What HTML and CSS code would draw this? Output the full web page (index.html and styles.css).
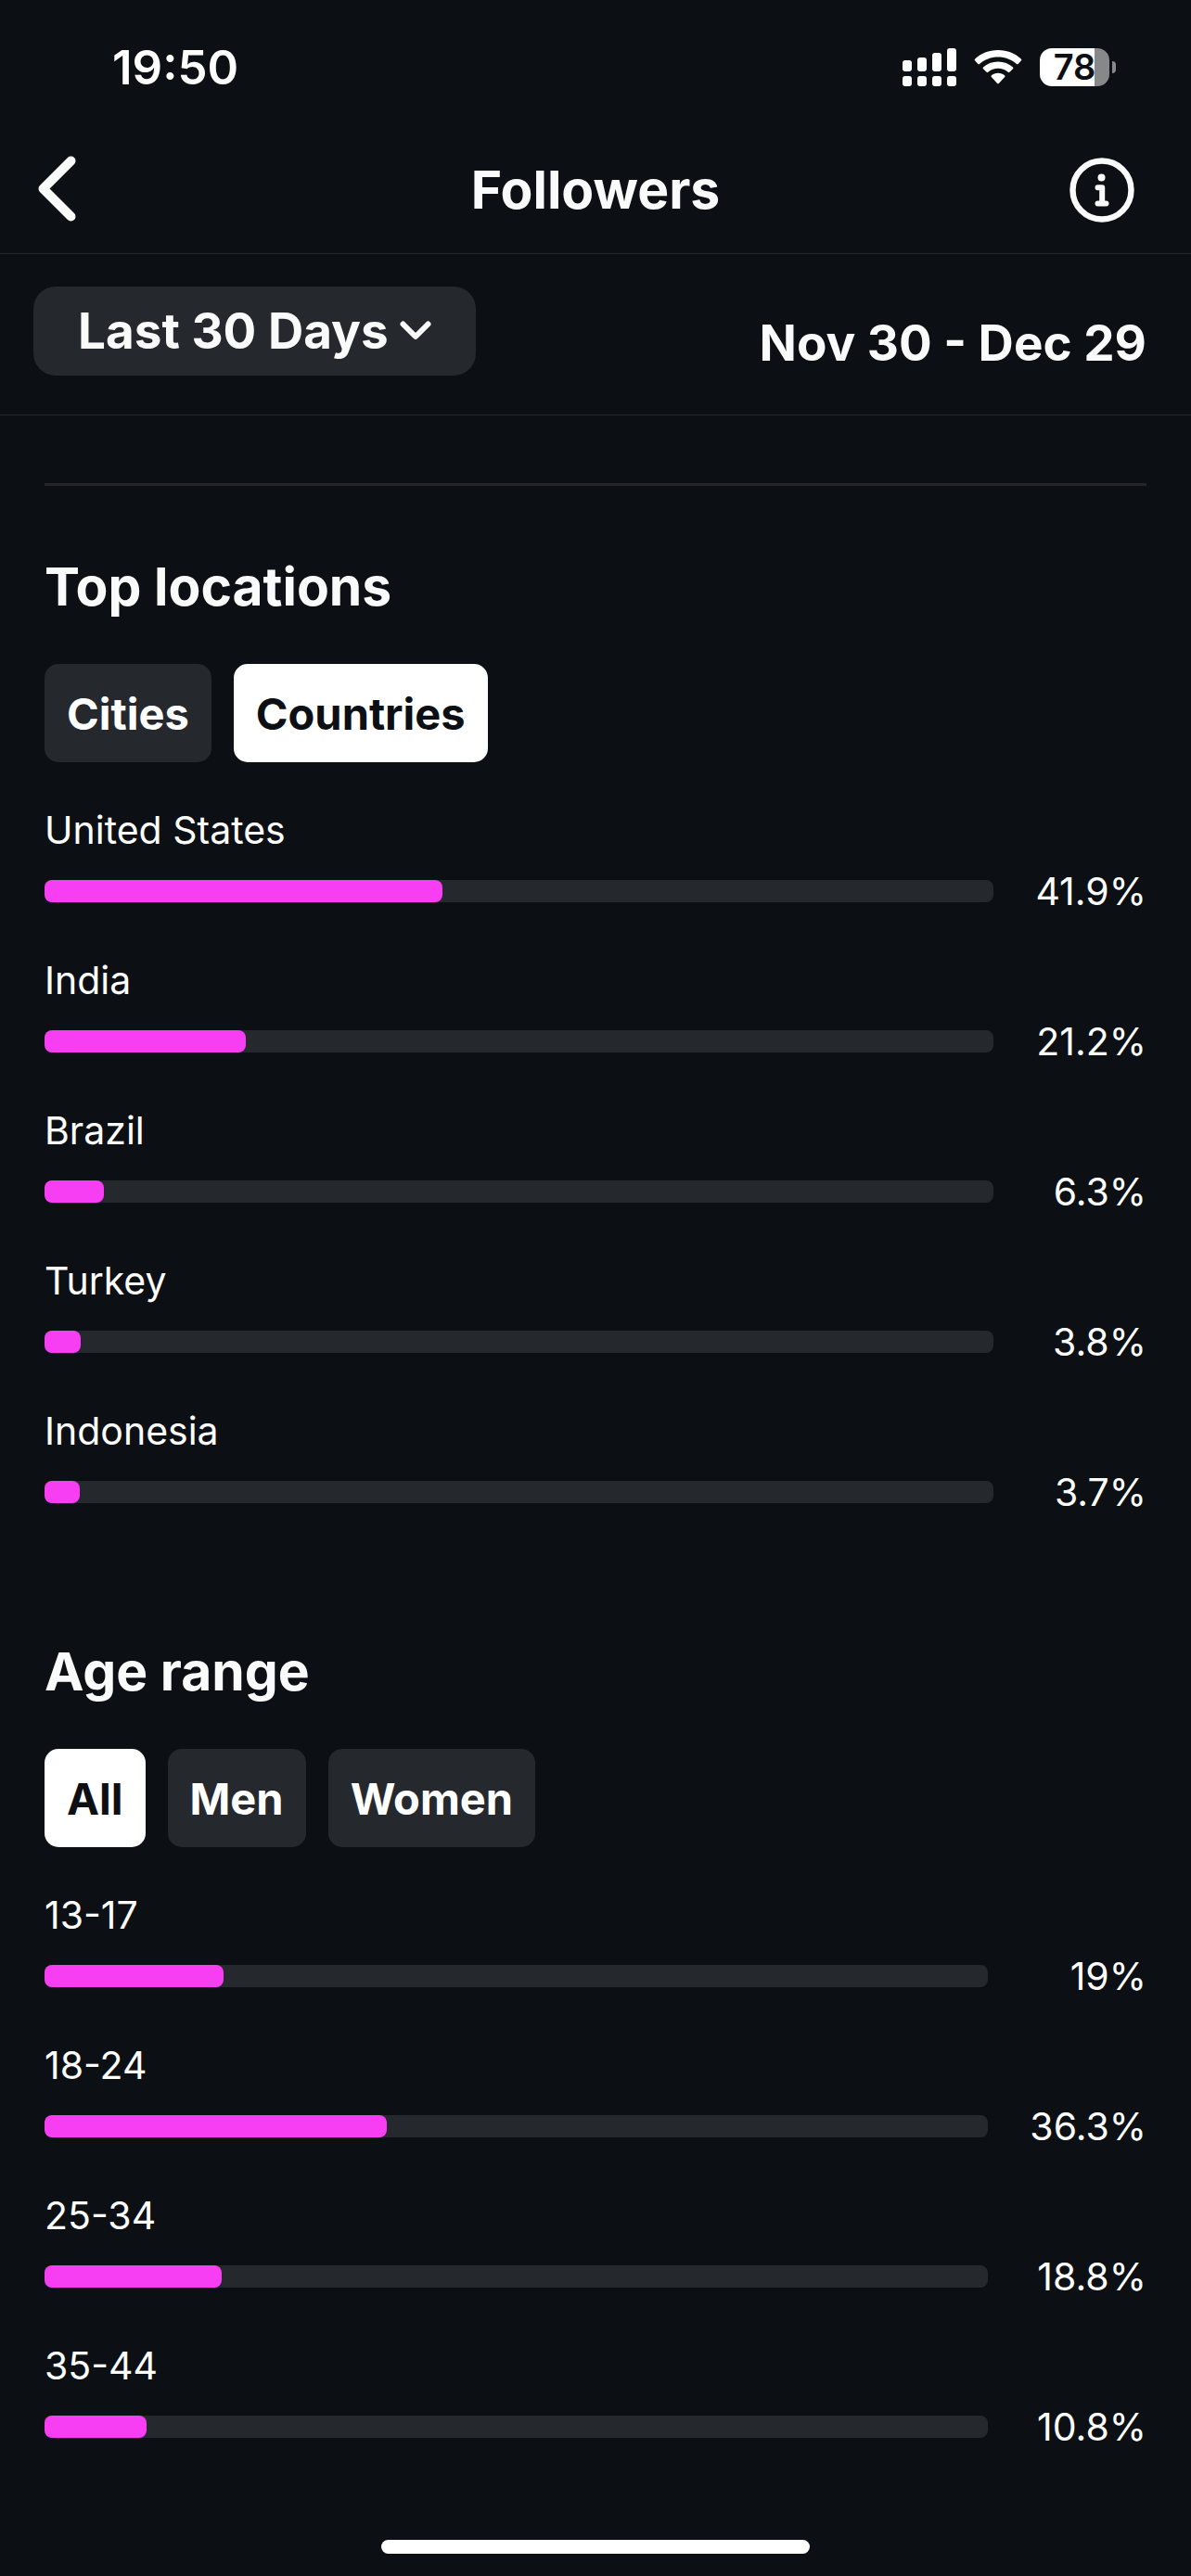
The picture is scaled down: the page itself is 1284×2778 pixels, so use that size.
FILE: index.html
```html
<!DOCTYPE html>
<html lang="en">
<head>
    <meta charset="UTF-8">
    <meta name="viewport" content="width=device-width, initial-scale=1.0">
    <title>Followers</title>
    <link rel="stylesheet" href="styles.css">
</head>
<body>

<div class="status-bar">
    <span class="time">19:50</span>
    <div class="status-icons">
        <svg class="signal" width="58" height="42" viewBox="0 0 58 42" fill="#fff">
            <rect x="0" y="13" width="10" height="12" rx="3"/>
            <rect x="16" y="10" width="10" height="15" rx="3"/>
            <rect x="32" y="5" width="10" height="20" rx="3"/>
            <rect x="48" y="0" width="10" height="25" rx="3"/>
            <rect x="0" y="30" width="10" height="11" rx="3"/>
            <rect x="16" y="30" width="10" height="11" rx="3"/>
            <rect x="32" y="30" width="10" height="11" rx="3"/>
            <rect x="48" y="30" width="10" height="11" rx="3"/>
        </svg>
        <svg class="wifi" width="52" height="42" viewBox="0 0 52 42" fill="#fff">
            <path d="M26 2C16 2 7.500 5.500 1 11.700Q0.200 12.500 1 13.300L4.400 16.900Q5.200 17.600 6 16.900C11.500 12 18.500 9.400 26 9.400S40.500 12 46 16.900Q46.800 17.600 47.600 16.900L51 13.300Q51.800 12.500 51 11.700C44.500 5.500 36 2 26 2Z"/>
            <path d="M26 14.500C19.800 14.500 14.200 16.700 10 20.600Q9.200 21.400 10 22.200L13.600 25.800Q14.400 26.500 15.200 25.800C18.200 23.200 21.900 21.700 26 21.700S33.800 23.200 36.800 25.800Q37.600 26.500 38.400 25.800L42 22.200Q42.800 21.400 42 20.600C37.800 16.700 32.200 14.500 26 14.500Z"/>
            <path d="M26 26.800C23.200 26.800 20.800 27.700 18.900 29.200Q18 30 18.800 30.900L25.200 37.900Q26 38.700 26.800 37.900L33.200 30.900Q34 30 33.100 29.200C31.200 27.700 28.800 26.800 26 26.800Z"/>
        </svg>
        <div class="battery">
            <span class="battery-level">78</span>
        </div>
    </div>
</div>

<header class="header">
    <button type="button" class="icon-button" aria-label="Back">
        <svg width="42" height="72" viewBox="0 0 42 72" fill="none" stroke="#f9fbfa" stroke-width="10" stroke-linecap="round" stroke-linejoin="round">
            <path d="M36.500 5.500L6.500 35.500L36.500 65.500"/>
        </svg>
    </button>
    <h1 class="title">Followers</h1>
    <button type="button" class="icon-button" aria-label="Info">
        <svg width="72" height="72" viewBox="0 0 72 72">
            <circle cx="36" cy="37" r="31.500" fill="none" stroke="#f9fbfa" stroke-width="6.400"/>
            <circle cx="35.500" cy="23.500" r="4" fill="#f9fbfa"/>
            <path d="M31.500 34.300H36.200V51.500M31.500 51.500H40.500" fill="none" stroke="#f9fbfa" stroke-width="6" stroke-linecap="round" stroke-linejoin="round"/>
        </svg>
    </button>
</header>

<div class="filter-bar">
    <button type="button" class="period">
        Last 30 Days
        <svg width="34" height="22" viewBox="0 0 34 22" fill="none" stroke="#f9fbfa" stroke-width="6" stroke-linecap="round" stroke-linejoin="round">
            <path d="M3.500 3.500L17 17L30.500 3.500"/>
        </svg>
    </button>
    <span class="dates">Nov 30 - Dec 29</span>
</div>

<main class="content">
    <section class="section">
        <h2 class="section-title">Top locations</h2>
        <div class="chips">
            <button type="button" class="chip">Cities</button>
            <button type="button" class="chip active">Countries</button>
        </div>
        <div class="chart">
            <span class="label">United States</span>
            <div class="track"><div class="fill" style="width: 41.9%"></div></div>
            <span class="value">41.9%</span>

            <span class="label">India</span>
            <div class="track"><div class="fill" style="width: 21.2%"></div></div>
            <span class="value">21.2%</span>

            <span class="label">Brazil</span>
            <div class="track"><div class="fill" style="width: 6.3%"></div></div>
            <span class="value">6.3%</span>

            <span class="label">Turkey</span>
            <div class="track"><div class="fill" style="width: 3.8%"></div></div>
            <span class="value">3.8%</span>

            <span class="label">Indonesia</span>
            <div class="track"><div class="fill" style="width: 3.7%"></div></div>
            <span class="value">3.7%</span>
        </div>
    </section>

    <section class="section">
        <h2 class="section-title">Age range</h2>
        <div class="chips">
            <button type="button" class="chip active">All</button>
            <button type="button" class="chip">Men</button>
            <button type="button" class="chip">Women</button>
        </div>
        <div class="chart">
            <span class="label">13-17</span>
            <div class="track"><div class="fill" style="width: 19%"></div></div>
            <span class="value">19%</span>

            <span class="label">18-24</span>
            <div class="track"><div class="fill" style="width: 36.3%"></div></div>
            <span class="value">36.3%</span>

            <span class="label">25-34</span>
            <div class="track"><div class="fill" style="width: 18.8%"></div></div>
            <span class="value">18.8%</span>

            <span class="label">35-44</span>
            <div class="track"><div class="fill" style="width: 10.8%"></div></div>
            <span class="value">10.8%</span>
        </div>
    </section>
</main>

<div class="home-indicator"></div>

</body>
</html>
```

FILE: styles.css
```css
* {
    box-sizing: border-box;
}
body {
    margin: 0;
    min-height: 100vh;
    display: flex;
    flex-direction: column;
    background-color: #0c0f14;
    color: #f9fbfa;
    font-family: Inter, "Liberation Sans", sans-serif;
}
button {
    border: none;
    color: inherit;
    font-family: inherit;
    cursor: pointer;
}
svg {
    display: block;
}

/* Status bar */
.status-bar {
    display: flex;
    justify-content: space-between;
    align-items: center;
    height: 145px;
    padding: 0 85px 0 121px;
    color: #fff;
}
.time {
    font-size: 51px;
    font-weight: 600;
}
.status-icons {
    display: flex;
    align-items: center;
    gap: 19px;
}
.battery {
    position: relative;
    width: 75px;
    height: 41px;
    margin-right: 3px;
    border-radius: 13px;
    background: linear-gradient(to right, #fff 79%, #87888a 79%);
    color: #0c0f14;
    text-align: center;
}
.battery::after {
    content: "";
    position: absolute;
    left: 78px;
    top: 14px;
    width: 4px;
    height: 13px;
    border-radius: 0 4px 4px 0;
    background-color: #87888a;
}
.battery-level {
    font-size: 38px;
    font-weight: 600;
    line-height: 41px;
}

/* Header */
.header {
    display: flex;
    justify-content: space-between;
    align-items: center;
    height: 129px;
    padding: 0 40px 10px;
    border-bottom: 1px solid #25282d;
}
.icon-button {
    display: flex;
    width: 92px;
    padding: 0;
    background: none;
}
.title {
    margin: 0;
    font-size: 57px;
    font-weight: 700;
}

/* Period filter */
.filter-bar {
    display: flex;
    justify-content: space-between;
    align-items: flex-start;
    height: 174px;
    padding: 35px 48px 0 36px;
    border-bottom: 1px solid #25282d;
    font-size: 53px;
    font-weight: 700;
}
.period {
    display: flex;
    align-items: center;
    gap: 12px;
    height: 96px;
    padding: 0 48px;
    border-radius: 24px;
    background-color: #25282d;
    font-size: 53px;
    font-weight: 700;
}
.dates {
    padding-top: 13px;
    line-height: 96px;
}

/* Sections */
.content {
    margin: 73px 48px 0;
    border-top: 3px solid #232529;
}
.section {
    padding: 69px 0 19px;
}
.section-title {
    margin: 0 0 43px;
    font-size: 57px;
    font-weight: 700;
    line-height: 80px;
}
.chips {
    display: flex;
    gap: 24px;
    margin-bottom: 43px;
}
.chip {
    height: 106px;
    padding: 0 24px;
    border-radius: 15px;
    background-color: #25282d;
    color: #fff;
    font-size: 47px;
    font-weight: 700;
}
.chip.active {
    background-color: #fff;
    color: #0c0f14;
}

/* Bar chart */
.chart {
    display: grid;
    grid-template-columns: 1fr auto;
    column-gap: 45px;
    align-items: center;
    color: #fff;
    font-size: 41px;
}
.label {
    grid-column: 1 / 3;
    line-height: 60px;
}
.track {
    height: 24px;
    margin-bottom: 30px;
    border-radius: 8px;
    background-color: #25282d;
}
.fill {
    height: 100%;
    border-radius: 8px;
    background-color: #f73ef3;
}
.value {
    line-height: 72px;
    margin-bottom: 30px;
    text-align: right;
}

.home-indicator {
    width: 36%;
    height: 15px;
    margin: auto auto 24px;
    border-radius: 8px;
    background-color: #fff;
}
```
